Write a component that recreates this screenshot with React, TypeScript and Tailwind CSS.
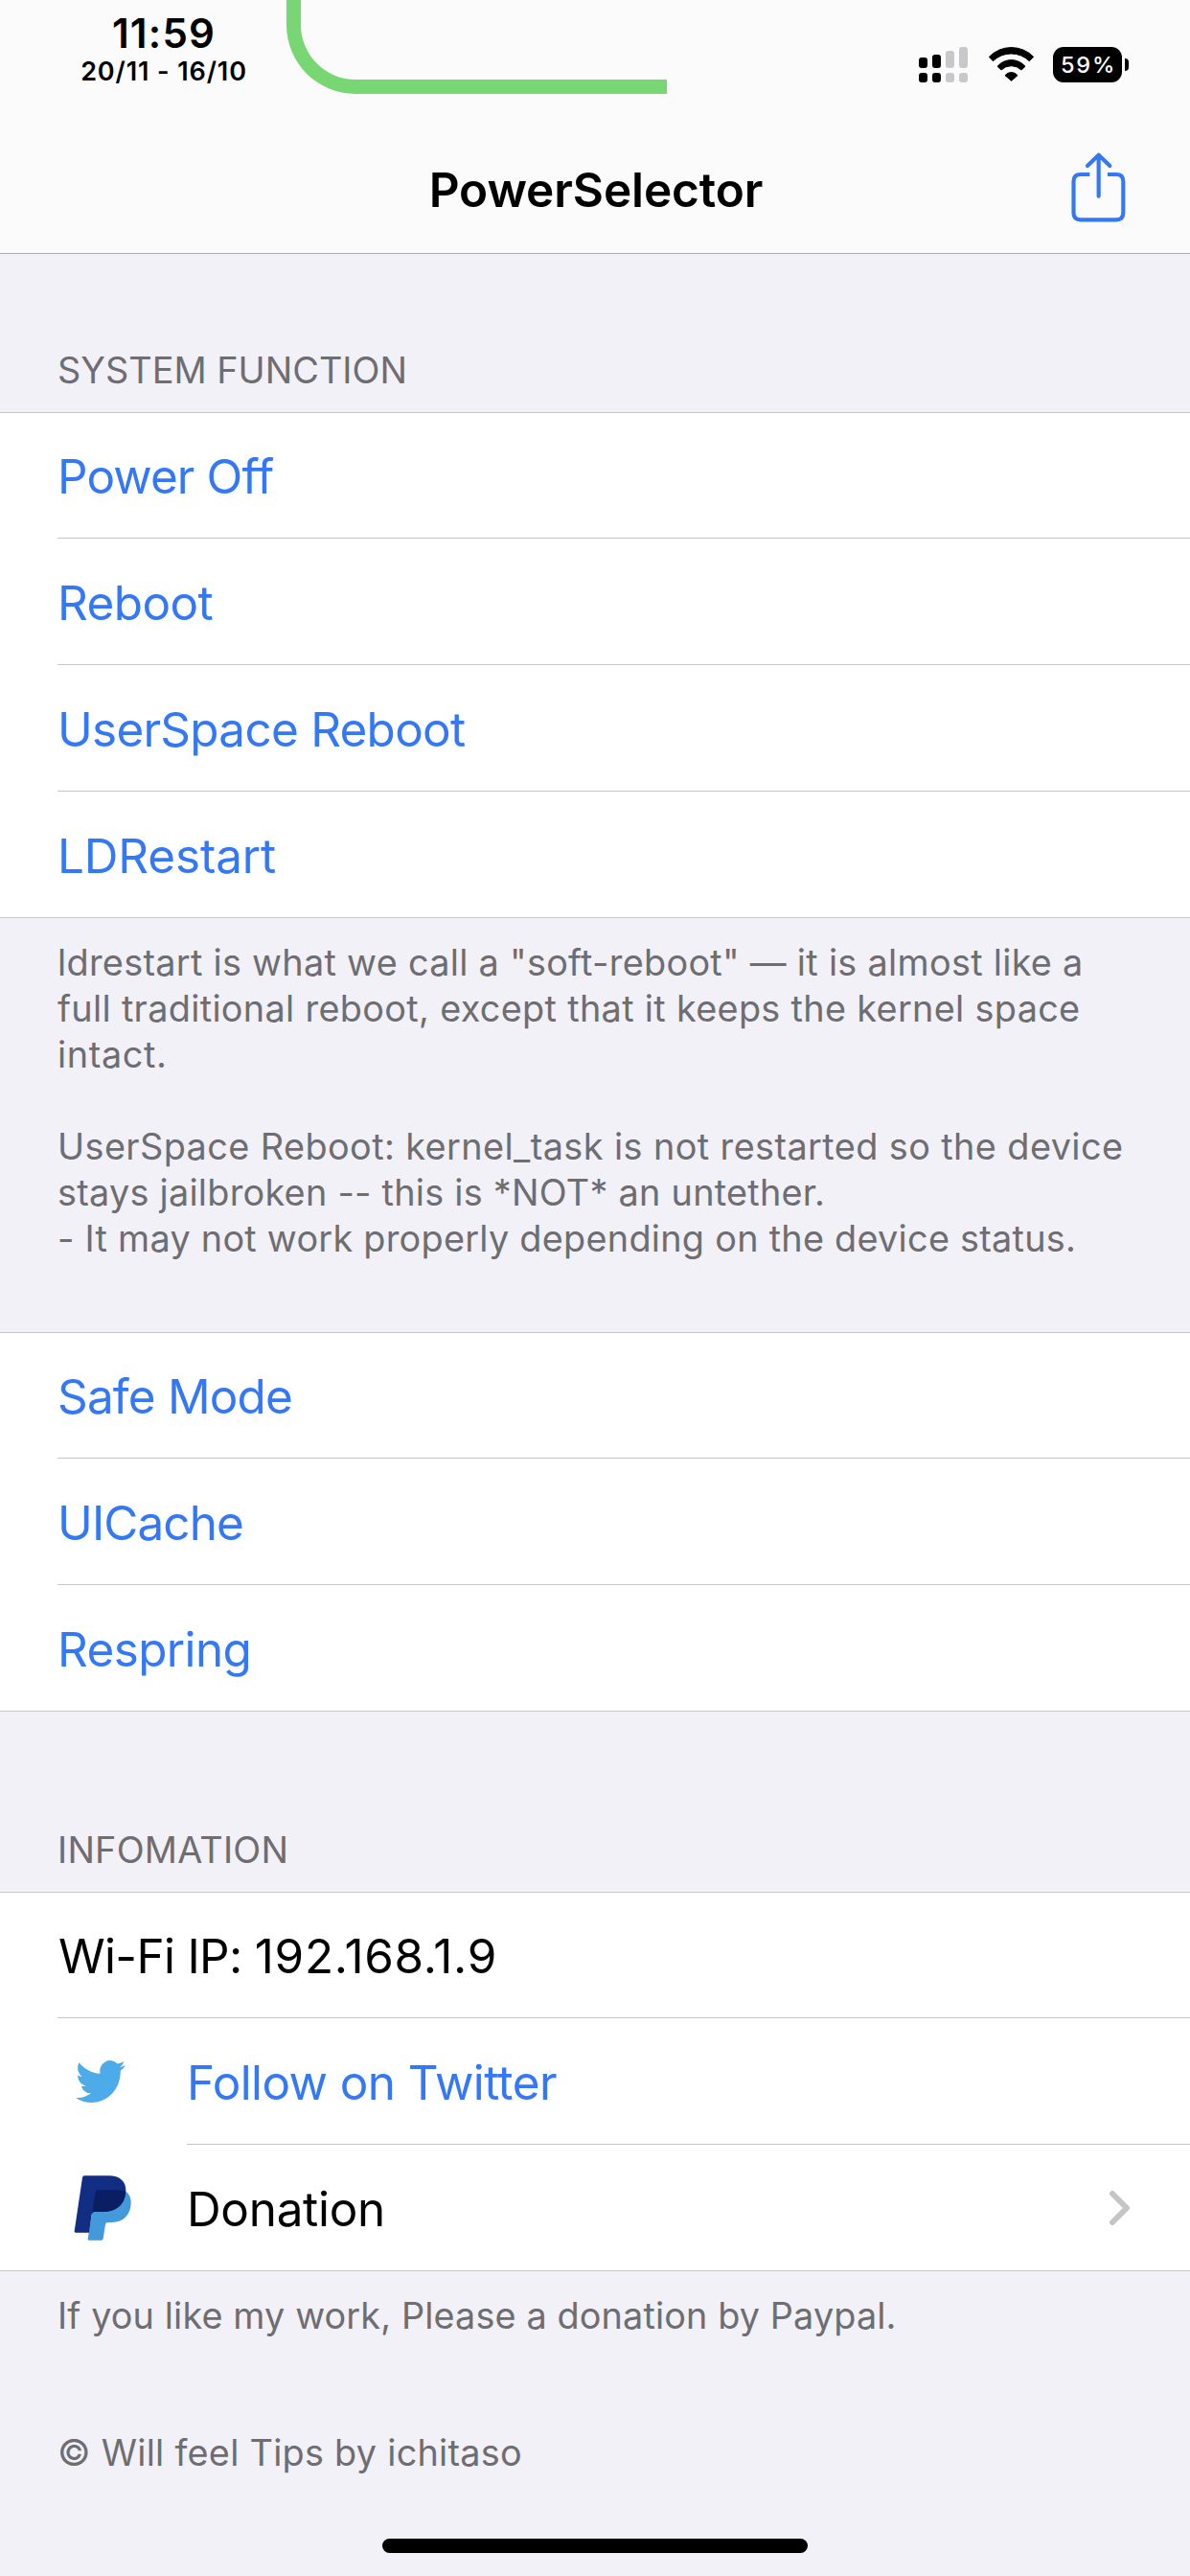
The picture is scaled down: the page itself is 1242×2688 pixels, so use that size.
import type { ReactNode } from "react";

const BLUE = "text-[#3478f6]";

function SignalIcon() {
  const active = "#000000";
  const idle = "#c8c8ca";
  return (
    <svg width="52" height="37" viewBox="0 0 52 37" className="block">
      <rect x="0" y="11" width="9" height="11" rx="3" fill={active} />
      <rect x="14" y="8" width="9" height="14" rx="3" fill={active} />
      <rect x="28" y="4" width="9" height="18" rx="3" fill={idle} />
      <rect x="42" y="0" width="9" height="22" rx="3" fill={idle} />
      <rect x="0" y="27" width="9" height="10" rx="3" fill={active} />
      <rect x="14" y="27" width="9" height="10" rx="3" fill={active} />
      <rect x="28" y="27" width="9" height="10" rx="3" fill={idle} />
      <rect x="42" y="27" width="9" height="10" rx="3" fill={idle} />
    </svg>
  );
}

function WifiIcon() {
  return (
    <svg width="49" height="37" viewBox="333 87 147 111" className="block">
      <g fill="#000" stroke="#000" strokeWidth="3" strokeLinejoin="round">
        <path d="M337 118 A97 97 0 0 1 476 118 L463 131 A82 82 0 0 0 349 131 Z" />
        <path d="M363 148 A57 57 0 0 1 450 148 L438 159 A45 45 0 0 0 375 159 Z" />
        <path d="M387 176 A25 25 0 0 1 426 176 L406.500 193 Z" />
      </g>
    </svg>
  );
}

function ShareIcon() {
  return (
    <svg width="60.67" height="75.33" viewBox="590 415 182 226" fill="none" stroke="#3478f6" strokeWidth="12.5" className="mb-1 block">
      <path d="M654 487 H626 Q603.500 487 603.500 509 V607 Q603.500 629 626 629 H737 Q759 629 759 607 V509 Q759 487 737 487 H710" />
      <path d="M682 555 V427 M647 460 L682 426 L717 460" strokeLinecap="round" strokeLinejoin="round" />
    </svg>
  );
}

function TwitterIcon() {
  return (
    <svg width="52" height="44" viewBox="0 2.2 24 19.6" preserveAspectRatio="none" fill="#4dabe9" className="ml-[19px] block">
      <path d="M23.953 4.57a10 10 0 01-2.825.775 4.958 4.958 0 002.163-2.723c-.951.555-2.005.959-3.127 1.184a4.92 4.92 0 00-8.384 4.482C7.69 8.095 4.067 6.13 1.64 3.162a4.822 4.822 0 00-.666 2.475c0 1.71.87 3.213 2.188 4.096a4.904 4.904 0 01-2.228-.616v.06a4.923 4.923 0 003.946 4.827 4.996 4.996 0 01-2.212.085 4.936 4.936 0 004.604 3.417 9.867 9.867 0 01-6.102 2.105c-.39 0-.779-.023-1.17-.067a13.995 13.995 0 007.557 2.209c9.053 0 13.998-7.496 13.998-13.985 0-.21 0-.42-.015-.63A9.935 9.935 0 0024 4.59z" />
    </svg>
  );
}

function PaypalIcon() {
  return (
    <svg width="60" height="68" viewBox="80 481 180 204" className="ml-[17px] block">
      <path fill="#4499db" d="M241 530 C253 538 259 550 259 566 C259 604 236 628 200 628 H187 Q180 628 179 635 L172 679 Q171 684 167 684 H128 Q123 684 124 679 L148 534 Q149 527 155 527 H225 Z" />
      <path fill="#112e82" d="M113 482 H190 C224 482 243 500 243 527 C243 570 215 595 170 595 H144 Q137 595 136 603 L128 660 H86 Q81 660 82 655 L107 488 Q108 482 113 482 Z" />
      <path fill="#0a1f63" d="M148 534 Q149 527 155 527 H215 Q234 527 242 533 C239 575 213 595 170 595 H144 Q139 595 137 602 Z" />
    </svg>
  );
}

function Chevron() {
  return (
    <svg width="24" height="38" viewBox="0 0 24 38" fill="none" stroke="#c5c5c7" strokeWidth="6" strokeLinecap="round" strokeLinejoin="round" className="mr-[61px] block">
      <path d="M4 4 L19 19 L4 34" />
    </svg>
  );
}

function Header({ className, children }: { className: string; children: ReactNode }) {
  return <h2 className={`flex items-end px-[60px] pb-5 text-[37.8px] leading-[48px] text-[#6d6d72] ${className}`}>{children}</h2>;
}

function Group({ children }: { children: ReactNode }) {
  return (
    <section className="border-t border-[#c6c6c8] bg-white">
      <ul className="-mt-px">{children}</ul>
    </section>
  );
}

type RowProps = { label: ReactNode; className: string; icon?: ReactNode; trailing?: ReactNode; last?: boolean };

function Row({ label, className, icon, trailing, last }: RowProps) {
  return (
    <li className={`flex h-[132px] ${last ? "border-b border-[#c6c6c8]" : ""} pl-[60px]`}>
      {icon && <div className="flex w-[135px] items-center">{icon}</div>}
      <div className={`flex flex-1 items-center justify-between ${last ? "" : "border-b border-[#c6c6c8]"}`}>
        <span className={`pt-[3px] text-[49.4px] leading-[60px] whitespace-nowrap ${className}`}>{label}</span>
        {trailing}
      </div>
    </li>
  );
}

function Line({ className, children }: { className: string; children: ReactNode }) {
  return <span className={`block h-12 whitespace-nowrap ${className}`}>{children}</span>;
}

export default function App() {
  return (
    <div className="flex h-[2688px] w-[1242px] flex-col overflow-hidden bg-[#f2f1f7] font-['Inter',sans-serif] text-black">
      <header className="relative h-[265px] border-b border-[#adadb0] bg-[#fbfbfc]">
        <div className="absolute top-0 left-[298.5px] h-[97.5px] w-[397.5px] rounded-bl-[72px] border-b-[15px] border-l-[15px] border-[#78d773]" />
        <div className="flex h-[132px] justify-between">
          <div className="w-[342px] pt-[13px] text-center font-semibold">
            <div className="text-[42px] leading-[44px] tracking-[1.2px]">11:59</div>
            <div className="text-[27px] leading-[36px] tracking-[0.9px]">20/11 - 16/10</div>
          </div>
          <div className="flex items-start pt-[49px] pr-16">
            <SignalIcon />
            <div className="ml-5">
              <WifiIcon />
            </div>
            <div className="ml-[19px] flex items-center gap-[3px]">
              <div className="flex h-[37px] w-[72px] items-center justify-center rounded-[11px] bg-black pl-0.5 text-[23.5px] leading-none font-medium tracking-[1.8px] text-white">
                59%
              </div>
              <div className="h-[13px] w-1 rounded-r-full bg-black" />
            </div>
          </div>
        </div>
        <div className="flex h-[132px] items-center">
          <div className="w-[300px]" />
          <h1 className="flex-1 pl-0.5 text-center text-[49.5px] leading-[60px] font-semibold tracking-[-0.1px]">PowerSelector</h1>
          <div className="flex w-[300px] justify-end pr-[65px]">
            <ShareIcon />
          </div>
        </div>
      </header>

      <Header className="h-[165px] tracking-[0.03px]">SYSTEM FUNCTION</Header>
      <Group>
        <Row label="Power Off" className={`${BLUE} tracking-[-0.87px]`} />
        <Row label="Reboot" className={`${BLUE} tracking-[-0.57px]`} />
        <Row label="UserSpace Reboot" className={`${BLUE} tracking-[-0.71px]`} />
        <Row label="LDRestart" className={`${BLUE} tracking-[-0.12px]`} last />
      </Group>

      <p className="h-[432px] pt-[22px] pl-[60px] text-[37.8px] leading-[48px] text-[#6d6d72]">
        <Line className="tracking-[0.3px]">ldrestart is what we call a "soft-reboot" — it is almost like a</Line>
        <Line className="tracking-[0.33px]">full traditional reboot, except that it keeps the kernel space</Line>
        <Line className="mb-12 tracking-[0.63px]">intact.</Line>
        <Line className="tracking-[0.42px]">UserSpace Reboot: kernel_task is not restarted so the device</Line>
        <Line className="tracking-[0.26px]">stays jailbroken -- this is *NOT* an untether.</Line>
        <Line className="tracking-[0.27px]">- It may not work properly depending on the device status.</Line>
      </p>

      <Group>
        <Row label="Safe Mode" className={`${BLUE} tracking-[-0.8px]`} />
        <Row label="UICache" className={`${BLUE} tracking-[-0.87px]`} />
        <Row label="Respring" className={`${BLUE} tracking-[-0.6px]`} last />
      </Group>

      <Header className="h-[188px] tracking-[0.24px]">INFOMATION</Header>
      <Group>
        <Row
          label={
            <>
              <span className="tracking-[-0.65px]">Wi-Fi IP: </span>
              <span className="tracking-[0.7px]">192.168.1.9</span>
            </>
          }
          className="pl-px"
        />
        <Row label="Follow on Twitter" className={`${BLUE} tracking-[-0.57px]`} icon={<TwitterIcon />} />
        <Row label="Donation" className="tracking-[-0.27px]" icon={<PaypalIcon />} trailing={<Chevron />} last />
      </Group>

      <footer className="flex flex-1 flex-col pt-[22px] pl-[60px] text-[37.8px] leading-[48px] text-[#6d6d72]">
        <Line className="tracking-[0.13px]">If you like my work, Please a donation by Paypal.</Line>
        <Line className="mt-[95px] tracking-[0.27px]">© Will feel Tips by ichitaso</Line>
        <div className="mt-auto mr-[399px] mb-6 ml-[339px] h-[15px] rounded-full bg-black" />
      </footer>
    </div>
  );
}
